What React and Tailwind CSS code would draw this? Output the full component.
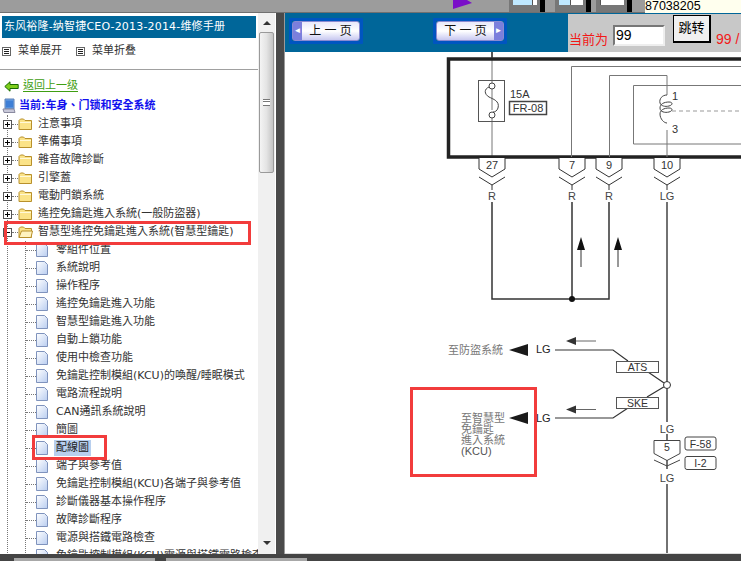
const cjk = { fontFamily: '"DejaVu Sans", "Noto Sans CJK TC", sans-serif' };

const topItems = ['注意事項', '準備事項', '雜音故障診斷', '引擎蓋', '電動門鎖系統', '遙控免鑰匙進入系統(一般防盜器)'];

const subItems = [
  '零組件位置', '系統說明', '操作程序', '遙控免鑰匙進入功能', '智慧型鑰匙進入功能', '自動上鎖功能',
  '使用中檢查功能', '免鑰匙控制模組(KCU)的喚醒/睡眠模式', '電路流程說明', 'CAN通訊系統說明', '簡圖', '配線圖',
  '端子與參考值', '免鑰匙控制模組(KCU)各端子與參考值', '診斷儀器基本操作程序', '故障診斷程序', '電源與搭鐵電路檢查',
  '免鑰匙控制模組(KCU)電源與搭鐵電路檢查',
];

const ExpandBox = ({ open }) => (
  <svg width="9" height="9" viewBox="0 0 9 9" className="shrink-0 -ml-[5px] bg-white">
    <rect x="0.5" y="0.5" width="8" height="8" fill="#fff" stroke="#555" />
    <path d={open ? 'M2 4.5h5' : 'M2 4.5h5M4.5 2v5'} stroke="#000" />
  </svg>
);

const Folder = ({ open }) => (
  <svg width="15" height="12" viewBox="0 0 15 12" className="shrink-0">
    <path d="M1 2.500 2.500 1h3L7 2.500h6.500v9H1z" fill="#fbe388" stroke="#b8902c" />
    {open && <path d="M1 11.500 3.500 5H14.500L13 11.500z" fill="#fff3c0" stroke="#b8902c" />}
    {!open && <path d="M2 4h11v1H2z" fill="#fff8d8" />}
  </svg>
);

const PageIcon = () => (
  <svg width="12" height="14" viewBox="0 0 12 14" className="shrink-0">
    <defs>
      <linearGradient id="pg" x1="0" y1="0" x2="1" y2="1">
        <stop offset="0" stopColor="#ffffff" />
        <stop offset="1" stopColor="#b9cdf0" />
      </linearGradient>
    </defs>
    <path d="M.5.5h8l3 3v10H.5z" fill="url(#pg)" stroke="#7f93bd" />
  </svg>
);

const MenuIcon = () => (
  <svg width="9" height="9" viewBox="0 0 9 9" className="shrink-0">
    <rect x="0.5" y="0.5" width="8" height="8" fill="#fff" stroke="#666" />
    <path d="M2 2.500h5M2 4.500h5M2 6.500h5" stroke="#222" />
  </svg>
);

const Sidebar = () => (
  <div className="relative flex h-full w-[276px] shrink-0 bg-white">
    <div className="w-[258px] shrink-0 overflow-hidden text-[11px] text-[#333]" style={cjk}>
      <div className="mx-[2px] mt-[3px] flex h-[22px] items-center bg-[#006699] pl-[2px] tracking-[0.18px] whitespace-nowrap text-white">
        东风裕隆-纳智捷CEO-2013-2014-维修手册
      </div>
      <div className="flex h-[32px] items-center border-b border-[#a0a0a0] pb-[5px] pl-[2px]">
        <MenuIcon />
        <span className="ml-[7px] w-[58px]">菜单展开</span>
        <MenuIcon />
        <span className="ml-[7px]">菜单折叠</span>
      </div>
      <div className="flex h-[27px] items-center pl-[4px] pt-[6px]">
        <svg width="15" height="11" viewBox="0 0 15 11" className="shrink-0">
          <path d="M.8 5.500 6 .8v2.700h8.200v4H6v2.700z" fill="#7fce1c" stroke="#176b00" />
        </svg>
        <span className="ml-[4px] text-[#3f9e12] underline underline-offset-2">返回上一级</span>
      </div>
      <div className="flex h-[18px] items-center pl-[2px] font-bold text-[#1111ee]">
        <svg width="14" height="16" viewBox="0 0 14 16" className="shrink-0">
          <path d="M3 1h9v10H3z" fill="#6fa6e6" stroke="#5a7fb5" />
          <path d="M4 2.500h7v7H4z" fill="#3f7fd6" />
          <path d="M1 11h11l1 3.500H2z" fill="#c8c8d8" stroke="#8a8aa0" />
        </svg>
        <span className="ml-[3px] whitespace-nowrap">当前:车身、门锁和安全系统</span>
      </div>
      <div className="ml-[7px] border-l border-dotted border-[#777]">
        {topItems.map((item) => (
          <div key={item} className="flex h-[18px] items-center whitespace-nowrap">
            <ExpandBox />
            <span className="w-[6px] shrink-0 border-t border-dotted border-[#777]" />
            <Folder />
            <span className="ml-[5px]">{item}</span>
          </div>
        ))}
        <div className="flex h-[18px] items-center whitespace-nowrap">
          <ExpandBox open />
          <span className="w-[6px] shrink-0 border-t border-dotted border-[#777]" />
          <Folder open />
          <span className="ml-[5px]">智慧型遙控免鑰匙進入系統(智慧型鑰匙)</span>
        </div>
        <div className="ml-[17px] border-l border-dotted border-[#777]">
          {subItems.map((item) => (
            <div key={item} className="flex h-[18px] items-center whitespace-nowrap">
              <span className="w-[10px] shrink-0 border-t border-dotted border-[#777]" />
              <PageIcon />
              <span className={item === '配線圖' ? 'ml-[6px] bg-[#b8cfee] px-[2px] text-[#222]' : 'ml-[8px]'}>{item}</span>
            </div>
          ))}
        </div>
      </div>
    </div>
    <div className="flex w-[17px] shrink-0 flex-col items-center bg-[#f0f0f0] pt-[8px] pb-[9px]">
      <span className="h-0 w-0 border-x-[4px] border-b-[4px] border-x-transparent border-b-[#333]" />
      <div className="mt-[7px] flex h-[141px] w-[15px] items-center justify-center rounded-[2px] border border-[#9a9a9a] bg-gradient-to-r from-[#f4f4f4] via-[#e4e4e4] to-[#c4c4c4]">
        <span className="h-[7px] w-[7px] border-y border-[#777] bg-[linear-gradient(#fff_0,#fff_1px,#777_1px,#777_2px,#fff_2px)]" />
      </div>
      <span className="mt-auto h-0 w-0 border-x-[4px] border-t-[4px] border-x-transparent border-t-[#333]" />
    </div>
    <span className="absolute left-[4px] top-[208px] h-[24px] w-[247px] border-[3px] border-[#f23c3c]" />
    <span className="absolute left-[32px] top-[422px] h-[25px] w-[75px] border-[3px] border-[#f23c3c]" />
  </div>
);

const PageButton = ({ children, dir }) => (
  <div className="rounded-[1px] border-[3px] border-[#0055c0]">
    <div className={`flex h-[20px] w-[68px] items-center rounded-[3px] border border-[#8a8ad0] bg-gradient-to-b from-[#e8e8fa] via-white to-[#c8c8f0] text-[12px] text-[#111] ${dir === 'next' ? 'flex-row-reverse' : ''}`}>
      <span className="flex h-full w-[9px] items-center justify-center bg-[#7b7fdc] text-[8px] leading-none text-white">
        {dir === 'next' ? '►' : '◄'}
      </span>
      <span className="flex-1 text-center whitespace-nowrap">{children}</span>
    </div>
  </div>
);

// fuse, relay and connector drawing, coordinates follow the page
const Connector = ({ x, n, label }) => (
  <g>
    <path d={`M${x - 13} 158v11l13 8 13-8v-11`} fill="#fff" stroke="#333" strokeWidth="1" />
    <path d={`M${x - 13} 177l13 8 13-8M${x} 185v5`} fill="none" stroke="#333" strokeWidth="1" />
    <text x={x} y="169" textAnchor="middle" fontSize="11" fill="#333">{n}</text>
    <text x={x} y="200" textAnchor="middle" fontSize="11" fill="#444">{label}</text>
  </g>
);

const Diagram = () => (
  <svg viewBox="285 52 456 501" className="block h-[501px] w-[456px] border-b border-[#ddd] box-content" fontFamily='"Liberation Sans", "Noto Sans CJK TC", sans-serif'>
    <path d="M492 52v58M492 118v39" stroke="#777" fill="none" />
    <rect x="448.500" y="59" width="300" height="98" fill="none" stroke="#222" strokeWidth="3.500" />
    <path d="M492 52v6" stroke="#333" strokeWidth="1.500" />
    <rect x="478.500" y="80.500" width="26" height="41" fill="none" stroke="#555" />
    <circle cx="492" cy="86" r="3" fill="#fff" stroke="#444" />
    <circle cx="492" cy="115" r="3" fill="#fff" stroke="#444" />
    <path d="M489 87c-5 2-5 7 0 10 4 2 11 4 9 11-1 3-3 4-5 4" fill="none" stroke="#444" />
    <text x="510" y="98" fontSize="11" fill="#333">15A</text>
    <rect x="509.500" y="101.500" width="37" height="13" fill="none" stroke="#444" strokeWidth="1.500" />
    <text x="528" y="112" fontSize="11" textAnchor="middle" fill="#333">FR-08</text>
    <path d="M741 66.500H571.500V157M609.500 157V75.500H667V95M667 130v27M741 85.500H633.500v58.500H741" fill="none" stroke="#777" />
    <path d="M667 95c-5 0-8 4-7 8 1 3 5 4 9 3 4-1 4-4 0-4-5 0-9 2-9 6 0 4 5 5 9 4 4-1 4-4 0-4-5 0-9 2-9 6 0 5 4 9 7 9" fill="none" stroke="#444" />
    <path d="M672 111h69" stroke="#999" strokeDasharray="4 3" />
    <text x="672" y="100" fontSize="11" fill="#333">1</text>
    <text x="672" y="133" fontSize="11" fill="#333">3</text>
    <Connector x={492} n="27" label="R" />
    <Connector x={572} n="7" label="R" />
    <Connector x={609} n="9" label="R" />
    <Connector x={667} n="10" label="LG" />
    <path d="M492 202v97h117v-97M572 202v97" fill="none" stroke="#333" strokeWidth="1.500" />
    <circle cx="572" cy="299" r="3" fill="#111" />
    <path d="M581 237l-4 13h8zM618 237l-4 13h8z" fill="#111" />
    <path d="M581 250v17M618 250v17" stroke="#333" />
    <path d="M667 202v220M667 434v6M667 460v9M667 484v69" stroke="#444" strokeWidth="1.500" fill="none" />
    <text x="448" y="354" fontSize="11" fill="#777">至防盜系統</text>
    <path d="M509 350l19-6v12zM509 418l19-6v12z" fill="#1a1a1a" />
    <text x="536" y="353" fontSize="11" fill="#222">LG</text>
    <text x="536" y="422" fontSize="11" fill="#222">LG</text>
    <path d="M555 350h58l15 11M648 372l19 13M667 385l-20 12M628 408l-15 10h-58" fill="none" stroke="#333" strokeWidth="1.200" />
    <path d="M566 341l10-4v8zM566 409.500l10-4v8z" fill="#333" />
    <path d="M576 341h20M576 409.500h20" stroke="#666" />
    <rect x="616.500" y="361.500" width="42" height="11" fill="#fff" stroke="#555" />
    <text x="637.500" y="371" textAnchor="middle" fontSize="10.500" fill="#333">ATS</text>
    <rect x="616.500" y="397.500" width="42" height="11" fill="#fff" stroke="#555" />
    <text x="637.500" y="407" textAnchor="middle" fontSize="10.500" fill="#333">SKE</text>
    <circle cx="667" cy="385" r="3.500" fill="#fff" stroke="#333" />
    <text fontSize="11" fill="#777">
      <tspan x="461" y="422">至智慧型</tspan>
      <tspan x="461" y="433">免鑰匙</tspan>
      <tspan x="461" y="444">進入系統</tspan>
      <tspan x="461" y="455" fill="#555">(KCU)</tspan>
    </text>
    <text x="667" y="433" textAnchor="middle" fontSize="11" fill="#444">LG</text>
    <path d="M654 440.500h26v13l-13 7-13-7z" fill="#fff" stroke="#444" />
    <text x="667" y="451" textAnchor="middle" fontSize="10.500" fill="#333">5</text>
    <path d="M654 460l13 6 13-6" fill="none" stroke="#444" />
    <text x="667" y="482" textAnchor="middle" fontSize="11" fill="#444">LG</text>
    <rect x="685" y="437" width="31" height="13" rx="2" fill="#fff" stroke="#444" />
    <text x="700.500" y="447.500" textAnchor="middle" fontSize="10.500" fill="#333">F-58</text>
    <rect x="685" y="456.500" width="31" height="13" rx="2" fill="#fff" stroke="#444" />
    <text x="700.500" y="467" textAnchor="middle" fontSize="10.500" fill="#333">I-2</text>
  </svg>
);

// half-hidden window buttons at the top of the strip
const WindowIcon = ({ blue, className }) => (
  <div className={`flex h-[12px] w-[36px] shrink-0 items-start bg-[#777] pl-[4px] ${className}`}>
    <div className="flex h-[5px] w-[24px] shrink-0 bg-white">
      <div className={`border-r border-[#555] bg-[#bfe8ff] ${blue}`} />
    </div>
    <div className="ml-[3px] h-full flex-1 bg-black" />
  </div>
);

export default function App() {
  return (
    <div className="relative flex h-[561px] w-[741px] flex-col overflow-hidden bg-[#4a4a4a]" style={{ fontFamily: '"Liberation Sans", "Noto Sans CJK SC", sans-serif' }}>
      {/* top strip */}
      <div className="flex h-[13px] shrink-0 items-start border-b border-[#707070] bg-[#9c9c9c]">
        <svg width="19" height="9" viewBox="0 0 19 9" className="ml-[453px] shrink-0">
          <path d="M0 0h14l5 3-19 6z" fill="#7a10c8" />
        </svg>
        <WindowIcon blue="w-[20px]" className="ml-[37px]" />
        <WindowIcon blue="w-[12px]" className="ml-[10px]" />
        <WindowIcon blue="w-[1px]" className="ml-[5px]" />
        <div className="ml-[13px] h-[13px] flex-1 bg-[#ffffee] text-[12.500px] leading-[13px] text-black">87038205</div>
      </div>

      <div className="flex min-h-0 flex-1">
        <Sidebar />
        <div className="w-[9px] shrink-0 border-r border-[#9a9a9a] bg-[#4a4a4a]" />
        <div className="flex min-w-0 flex-1 flex-col bg-white">
          <div className="flex h-[39px] shrink-0 items-stretch bg-[#006699] pl-[4px]">
            <div className="mt-[5px] self-start"><PageButton dir="prev">上 一 页</PageButton></div>
            <div className="ml-[70px] mt-[5px] self-start"><PageButton dir="next">下 一 页</PageButton></div>
            <div className="ml-[61px] mt-[1px] flex flex-1 items-start bg-[#c8c8c8] pl-[1px]">
              <span className="mt-[16px] text-[13px] leading-[20px] whitespace-nowrap text-[#f21818]">当前为</span>
              <div className="ml-[5px] mt-[11px] flex h-[21px] w-[52px] items-center border-2 border-t-[#777] border-l-[#777] border-r-[#eee] border-b-[#eee] bg-white pl-[1px] text-[14px] text-black">99</div>
              <button className="ml-[8px] mt-[1px] h-[28px] w-[38px] border border-r-2 border-b-2 border-black bg-[#f0f0f0] pb-[2px] text-[13px] text-black">跳转</button>
              <span className="ml-[5px] mt-[15px] text-[14px] leading-[20px] whitespace-nowrap text-[#f21818]">99 /</span>
            </div>
          </div>
          <Diagram />
        </div>
      </div>

      {/* bottom strip */}
      <div className="flex h-[7px] shrink-0 items-end bg-[#444]">
        <div className="ml-[14px] h-[3px] w-[141px] bg-[#a8a8a8]" />
        <div className="ml-[11px] h-[3px] w-[141px] bg-[#a8a8a8]" />
      </div>

      <span className="absolute left-[410px] top-[387px] h-[90px] w-[127px] border-[3px] border-[#f23c3c]" />
    </div>
  );
}
